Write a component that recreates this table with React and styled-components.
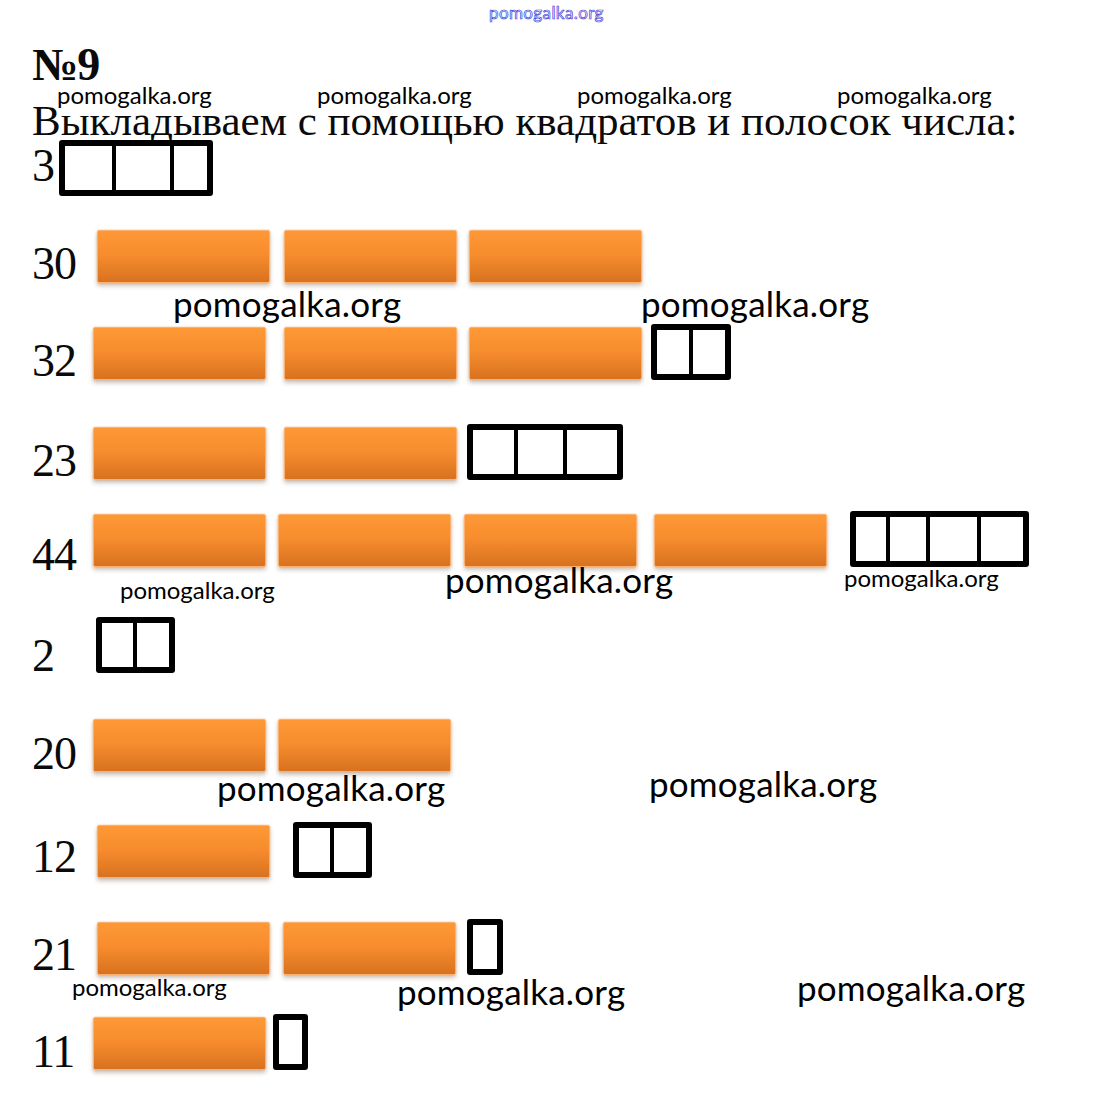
import styled, { createGlobalStyle } from "styled-components";

const GlobalStyle = createGlobalStyle`
  body {
    margin: 0;
    background: #fff;
  }
`;

const Page = styled.div`
  position: relative;
  width: 1093px;
  height: 1103px;
  overflow: hidden;
  padding: 42px 0 0 32px;
  box-sizing: border-box;
  color: #0a0a0a;
  font-family: "Liberation Serif", "Times New Roman", serif;
`;

const Title = styled.h1`
  margin: 0;
  font-size: 46px;
  line-height: 1;
  font-weight: 700;
  letter-spacing: -1px;
`;

const Heading = styled.p`
  margin: 14px 0 0;
  font-size: 43px;
  line-height: 38px;
  white-space: nowrap;
`;

const Row = styled.div`
  display: flex;
  align-items: flex-end;
  height: 56px;
  margin-top: ${({ $mt }) => $mt}px;
`;

const Label = styled.span`
  flex: none;
  width: ${({ $w }) => $w}px;
  font-size: 46px;
  line-height: 1;
  letter-spacing: -1px;
  margin-bottom: ${({ $lift }) => -7 + $lift}px;
`;

const Bar = styled.div`
  flex: none;
  width: 173px;
  height: 53px;
  margin-left: ${({ $gap }) => $gap}px;
  box-sizing: border-box;
  border: 1px solid #f9b070;
  border-radius: 2px;
  background: linear-gradient(to bottom, #fe9835 0%, #f78d2e 45%, #d8721f 100%);
  box-shadow: 0 3px 4px rgba(90, 60, 30, 0.3), 0 0 2px rgba(250, 170, 100, 0.7);
`;

const Box = styled.div`
  flex: none;
  display: flex;
  height: ${({ $h }) => $h || 56}px;
  margin-left: ${({ $gap }) => $gap}px;
  box-sizing: border-box;
  border: 6px solid #000;
  border-radius: 3px;
  background: #000;
  gap: 4px;
`;

const Cell = styled.div`
  width: ${({ $w }) => $w}px;
  background: #fff;
`;

const Mark = styled.span`
  position: absolute;
  left: ${({ $x }) => $x}px;
  top: ${({ $y }) => $y}px;
  font-family: Lato, "Open Sans", sans-serif;
  font-size: ${({ $big }) => ($big ? 35 : 24)}px;
  line-height: 1;
  color: #000;
  white-space: nowrap;
  letter-spacing: ${({ $big }) => ($big ? 0.2 : 0)}px;
`;

const TopMark = styled.span`
  position: absolute;
  left: 489px;
  top: 4px;
  font-family: Lato, "Open Sans", sans-serif;
  font-size: 17px;
  line-height: 1;
  color: #fff;
  -webkit-text-stroke: 0.7px #3b3bdc;
  letter-spacing: 0.4px;
`;

// items: [kind, left x, right x, cells]
const rows = [
  { n: "3", mt: 0, lift: 14, items: [["box", 59, 213, [47, 54, 33]]] },
  { n: "30", mt: 31, lift: 3, items: [["bar", 97, 270], ["bar", 284, 457], ["bar", 469, 642]] },
  {
    n: "32",
    mt: 41,
    lift: 3,
    items: [["bar", 93, 266], ["bar", 284, 457], ["bar", 469, 642], ["box", 651, 731, [32, 32]]],
  },
  { n: "23", mt: 44, lift: 3, items: [["bar", 93, 266], ["bar", 284, 457], ["box", 467, 623, [41, 45, 50]]] },
  {
    n: "44",
    mt: 31,
    lift: -4,
    items: [
      ["bar", 93, 266],
      ["bar", 278, 451],
      ["bar", 464, 637],
      ["bar", 654, 827],
      ["box", 850, 1029, [30, 36, 47, 42]],
    ],
  },
  { n: "2", mt: 50, lift: 1, items: [["box", 96, 175, [31, 32]]] },
  { n: "20", mt: 43, lift: 2, items: [["bar", 93, 266], ["bar", 278, 451]] },
  { n: "12", mt: 50, lift: 5, items: [["bar", 97, 270], ["box", 293, 372, [31, 32]]] },
  { n: "21", mt: 41, lift: 4, items: [["bar", 97, 270], ["bar", 283, 456], ["box", 467, 503, [24]]] },
  { n: "11", mt: 39, lift: 2, items: [["bar", 93, 266], ["box", 273, 308, [23]]] },
];

const marks = [
  { x: 57, y: 83 },
  { x: 317, y: 83 },
  { x: 577, y: 83 },
  { x: 837, y: 83 },
  { x: 173, y: 286, big: true },
  { x: 641, y: 286, big: true },
  { x: 120, y: 578 },
  { x: 445, y: 562, big: true },
  { x: 844, y: 566 },
  { x: 217, y: 770, big: true },
  { x: 649, y: 766, big: true },
  { x: 72, y: 975 },
  { x: 397, y: 974, big: true },
  { x: 797, y: 970, big: true },
];

const App = () => {
  return (
    <>
      <GlobalStyle />
      <Page>
        <TopMark>pomogalka.org</TopMark>
        <Title>№9</Title>
        <Heading>Выкладываем с помощью квадратов и полосок числа:</Heading>

        {rows.map((row) => {
          const first = row.items[0][1];
          return (
            <Row key={row.n} $mt={row.mt}>
              <Label $w={first - 32} $lift={row.lift}>
                {row.n}
              </Label>
              {row.items.map(([kind, left, right, cells], i) => {
                const gap = i === 0 ? 0 : left - row.items[i - 1][2];
                return kind === "bar" ? (
                  <Bar key={i} $gap={gap} />
                ) : (
                  <Box key={i} $gap={gap}>
                    {cells.map((w, j) => (
                      <Cell key={j} $w={w} />
                    ))}
                  </Box>
                );
              })}
            </Row>
          );
        })}

        {marks.map((m, i) => (
          <Mark key={i} $x={m.x} $y={m.y} $big={m.big}>
            pomogalka.org
          </Mark>
        ))}
      </Page>
    </>
  );
};

export default App;
